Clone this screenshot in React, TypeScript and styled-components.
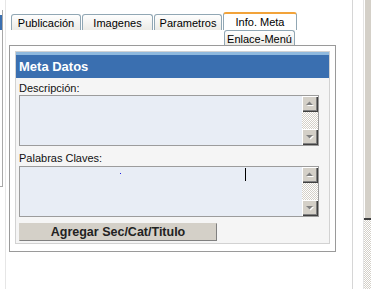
import React from 'react'
import styled, { createGlobalStyle } from 'styled-components'

const GlobalStyle = createGlobalStyle`
  html, body {
    margin: 0;
    padding: 0;
    background: #fff;
  }
  body {
    font-family: "Liberation Sans", Arial, sans-serif;
    font-size: 11px;
    color: #000;
  }
`

type TabProps = { $active?: boolean; $w: number; $h: number }

const tabs = [
  { label: 'Publicación', w: 70 },
  { label: 'Imagenes', w: 71 },
  { label: 'Parametros', w: 68 },
  { label: 'Info. Meta', w: 74, active: true },
]

export default function App() {
  return (
    <>
      <GlobalStyle />
      <Page>
        <LeftEdge>
          <LeftBox>
            <BlueBand />
          </LeftBox>
          <Rule $color="#e6e6e6" />
        </LeftEdge>

        <Main>
          <TabRow>
            {tabs.map((t) => (
              <Tab key={t.label} $w={t.w} $h={t.active ? 18 : 16} $active={t.active}>
                {t.label}
              </Tab>
            ))}
          </TabRow>
          <TabRowSecond>
            <Tab $w={71} $h={15} $lower>
              Enlace-Menú
            </Tab>
          </TabRowSecond>

          <Panel>
            <Section>
              <Header>Meta Datos</Header>
              <Label $top={4}>Descripción:</Label>
              <Field>
                <TextArea />
                <ScrollBar />
              </Field>
              <Label $top={6} $bottom={1}>Palabras Claves:</Label>
              <Field>
                <TextArea />
                <ScrollBar />
                <Dot style={{ left: 100, top: 6 }} />
                <Caret style={{ left: 225, top: 1 }} />
              </Field>
              <Button>Agregar Sec/Cat/Titulo</Button>
            </Section>
          </Panel>
        </Main>

        <RightEdge>
          <Rule $color="#d6d6d6" $left={16} />
          <Rule $color="#e4e4e4" $left={10} />
          <PageScroll>
            <PageThumb />
            <Checker />
          </PageScroll>
        </RightEdge>
      </Page>
    </>
  )
}

const ScrollBar = () => (
  <ScrollCol>
    <ScrollButton>
      <svg width="14" height="14" viewBox="0 0 14 14">
        <polygon points="4,9 11,9 7.5,5.5" fill="#fff" />
        <polygon points="3,8 10,8 6.5,4.5" fill="#808080" />
      </svg>
    </ScrollButton>
    <Checker />
    <ScrollButton>
      <svg width="14" height="14" viewBox="0 0 14 14">
        <polygon points="4,6 11,6 7.5,9.5" fill="#fff" />
        <polygon points="3,5 10,5 6.5,8.5" fill="#808080" />
      </svg>
    </ScrollButton>
  </ScrollCol>
)

const Page = styled.div`
  display: flex;
  width: 371px;
  height: 289px;
  overflow: hidden;
`

const LeftEdge = styled.div`
  display: flex;
  flex: none;
  width: 9px;
`

const LeftBox = styled.div`
  width: 2px;
  height: 171px;
  margin-top: 10px;
  padding-top: 5px;
  border-right: 1px solid #a8a8a8;
  border-bottom: 1px solid #a8a8a8;
`

const BlueBand = styled.div`
  height: 15px;
  background: #3a6fb0;
`

const Rule = styled.div<{ $color: string; $left?: number }>`
  flex: none;
  width: 1px;
  margin-left: ${(p) => p.$left ?? 2}px;
  background: ${(p) => p.$color};
`

const Main = styled.div`
  display: flex;
  flex-direction: column;
  flex: none;
  width: 327px;
`

const TabRow = styled.div`
  display: flex;
  align-items: flex-end;
  gap: 1px;
  height: 18px;
  margin-top: 12px;
  padding-left: 2px;
`

const TabRowSecond = styled.div`
  display: flex;
  align-items: flex-end;
  height: 15px;
  padding-left: 215px;
`

const Tab = styled.div<TabProps & { $lower?: boolean }>`
  box-sizing: border-box;
  display: flex;
  align-items: center;
  justify-content: center;
  width: ${(p) => p.$w}px;
  height: ${(p) => p.$h}px;
  padding-top: ${(p) => (p.$lower ? 2 : p.$active ? 0 : 1)}px;
  border: 1px solid #91a7b4;
  border-bottom: none;
  border-radius: 3px 3px 0 0;
  background: ${(p) => (p.$active ? '#fff' : 'linear-gradient(#fefefe, #ecebe6)')};
  border-top: ${(p) => (p.$active ? '2px solid #f2a33a' : '1px solid #91a7b4')};
  font-size: 11px;
  line-height: 13px;
  white-space: nowrap;
  color: #000;
`

const Panel = styled.div`
  box-sizing: border-box;
  height: 207px;
  padding: 5px 5px 7px 5px;
  border: 1px solid #9a9a9a;
  background: #fff;
`

const Section = styled.div`
  display: flex;
  flex-direction: column;
  align-items: flex-start;
  height: 191px;
  border: 1px solid #d2d2d2;
  background: #f5f5f5;
`

const Header = styled.div`
  align-self: stretch;
  height: 23px;
  padding-left: 3px;
  border-top: 3px solid #8fb9de;
  background: #3a6fb0;
  color: #fff;
  font-weight: bold;
  font-size: 13px;
  line-height: 23px;
`

const Label = styled.div<{ $top: number; $bottom?: number }>`
  margin: ${(p) => p.$top}px 0 ${(p) => p.$bottom ?? 0}px 3px;
  font-size: 11px;
  line-height: 13px;
  color: #111;
`

const Field = styled.div`
  position: relative;
  display: flex;
  box-sizing: border-box;
  width: 300px;
  height: 51px;
  margin-left: 3px;
  border: 1px solid #9c9c9c;
  background: #e8edf5;
`

const TextArea = styled.textarea`
  flex: 1;
  margin: 0;
  padding: 0;
  border: none;
  outline: none;
  resize: none;
  background: transparent;
`

const ScrollCol = styled.div`
  display: flex;
  flex-direction: column;
  width: 16px;
`

const ScrollButton = styled.div`
  box-sizing: border-box;
  display: flex;
  align-items: center;
  justify-content: center;
  height: 16px;
  background: #d4d0c8;
  box-shadow: inset 1px 1px #fff, inset -1px -1px #404040, inset -2px -2px #808080;
`

const Checker = styled.div`
  flex: 1;
  background: repeating-conic-gradient(#d4d0c8 0 25%, #fff 0 50%) 0 0 / 2px 2px;
`

const Dot = styled.span`
  position: absolute;
  width: 1px;
  height: 1px;
  background: #2020e0;
`

const Caret = styled.span`
  position: absolute;
  width: 1px;
  height: 13px;
  background: #000;
`

const Button = styled.div`
  box-sizing: border-box;
  display: flex;
  align-items: center;
  justify-content: center;
  width: 198px;
  height: 18px;
  margin: 6px 0 0 3px;
  border: 1px solid #d4d0c8;
  border-right-color: #808080;
  border-bottom-color: #808080;
  background: #d4d0c8;
  color: #222;
  font-weight: bold;
  font-size: 12.5px;
  white-space: nowrap;
`

const RightEdge = styled.div`
  display: flex;
  flex: 1;
`

const PageScroll = styled.div`
  display: flex;
  flex-direction: column;
  flex: 1;
`

const PageThumb = styled.div`
  height: 218px;
  background: #d4d0c8;
  box-shadow: inset 1px 0 #fff;
  border-bottom: 2px solid #404040;
`
